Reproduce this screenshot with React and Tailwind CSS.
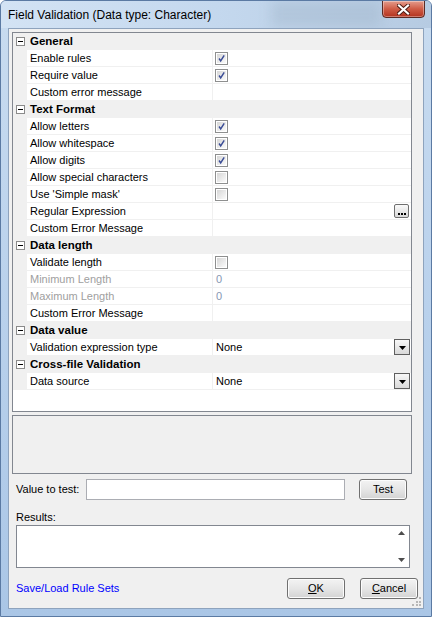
import React from 'react';

const rows = [
  { cat: 'General' },
  { label: 'Enable rules', type: 'check', checked: true },
  { label: 'Require value', type: 'check', checked: true },
  { label: 'Custom error message' },
  { cat: 'Text Format' },
  { label: 'Allow letters', type: 'check', checked: true },
  { label: 'Allow whitespace', type: 'check', checked: true },
  { label: 'Allow digits', type: 'check', checked: true },
  { label: 'Allow special characters', type: 'check', checked: false },
  { label: "Use 'Simple mask'", type: 'check', checked: false },
  { label: 'Regular Expression', type: 'ellipsis' },
  { label: 'Custom Error Message' },
  { cat: 'Data length' },
  { label: 'Validate length', type: 'check', checked: false },
  { label: 'Minimum Length', disabled: true, value: '0' },
  { label: 'Maximum Length', disabled: true, value: '0' },
  { label: 'Custom Error Message' },
  { cat: 'Data value' },
  { label: 'Validation expression type', type: 'dropdown', value: 'None' },
  { cat: 'Cross-file Validation' },
  { label: 'Data source', type: 'dropdown', value: 'None' },
];

const CheckBox = ({ checked }) => (
  <div className="w-[13px] h-[13px] border border-[#8e8f8f] bg-white p-px">
    <div className="w-full h-full bg-linear-to-br from-[#d6d6d6] to-[#fbfbfb] relative">
      {checked && (
        <svg viewBox="0 0 11 11" className="absolute inset-0 w-full h-full">
          <path d="M2.5 5.5 L4.5 8.5 L8.8 1.8" fill="none" stroke="#3a4c96" strokeWidth="1.8" />
        </svg>
      )}
    </div>
  </div>
);

const Minus = () => (
  <div className="w-[9px] h-[9px] border border-[#8a8a8a] bg-white flex items-center justify-center">
    <div className="w-[5px] h-px bg-black" />
  </div>
);

const VistaButton = ({ children, className = '' }) => (
  <div
    className={`flex items-center justify-center border border-[#707070] rounded-[3px] bg-linear-to-b from-[#f3f3f3] via-[#e6e6e6] to-[#d3d3d3] shadow-[inset_0_0_0_1px_#fcfcfc] ${className}`}
  >
    {children}
  </div>
);

const PropRow = ({ row }) => {
  if (row.cat) {
    return (
      <div className="flex h-[17px] bg-[#f0f0f0] items-center">
        <div className="w-[14px] flex justify-center pl-px">
          <Minus />
        </div>
        <span className="pl-[3px] font-bold text-[11.5px] text-black">{row.cat}</span>
      </div>
    );
  }
  return (
    <div className="flex h-[17px]">
      <div className="w-[14px] bg-[#f0f0f0]" />
      <div
        className={`w-[186px] border-b border-r border-[#f0f0f0] pl-[3px] flex items-center ${
          row.disabled ? 'text-[#a0a0a0]' : 'text-black'
        }`}
      >
        {row.label}
      </div>
      <div className="flex-1 border-b border-[#f0f0f0] flex items-center pl-[2px] pr-px relative">
        {row.type === 'check' && <CheckBox checked={row.checked} />}
        {row.value && (
          <span className={row.disabled ? 'text-[#8796b4] pl-px' : 'text-black pl-px'}>{row.value}</span>
        )}
        {row.type === 'ellipsis' && (
          <div className="ml-auto mr-px w-[15px] h-[14px] border border-[#6f6f6f] rounded-[2px] bg-linear-to-b from-[#fafafa] to-[#d8d8d8] flex items-end justify-center gap-px pb-[2px]">
            <div className="w-[2px] h-[2px] bg-black" />
            <div className="w-[2px] h-[2px] bg-black" />
            <div className="w-[2px] h-[2px] bg-black" />
          </div>
        )}
        {row.type === 'dropdown' && (
          <div className="ml-auto w-[16px] h-[16px] border border-[#5f5f5f] bg-linear-to-b from-[#f8f8f8] to-[#d9d9d9] flex items-end justify-center pb-[4px]">
            <svg width="7" height="4" viewBox="0 0 7 4">
              <path d="M0 0 H7 L3.5 4 Z" fill="#000" />
            </svg>
          </div>
        )}
      </div>
    </div>
  );
};

export default function App() {
  return (
    <div
      className="w-[432px] h-[617px] flex flex-col bg-linear-to-b from-[#c9dcf0] via-[#b9d1ec] to-[#aac6e6] border border-[#5b7aa3] rounded-t-[6px] overflow-hidden text-[11px]"
      style={{ fontFamily: '"Liberation Sans", Arial, sans-serif' }}
    >
      {/* Title bar */}
      <div className="h-[27px] relative flex items-center pl-[7px] bg-linear-to-r from-[#d3e3f4] via-[#c4d8ee] to-[#b6cbe2]">
        <div className="absolute left-[270px] top-0 w-[110px] h-[26px] bg-[#9fb3c8]/40 blur-[6px]" />
        <span className="relative text-[12px] text-black">Field Validation (Data type: Character)</span>
        <div className="absolute top-[-1px] right-[6px] w-[43px] h-[18px] rounded-b-[4px] border border-[#5b2a24] bg-linear-to-b from-[#e39c8d] via-[#cf5b45] to-[#b2321e] flex items-center justify-center shadow-[inset_0_0_0_1px_rgba(255,255,255,0.35)]">
          <svg width="13" height="11" viewBox="0 0 13 11">
            <path d="M2 1.5 L11 9.5 M11 1.5 L2 9.5" stroke="#4a1a12" strokeWidth="4" strokeLinecap="square" />
            <path d="M2 1.5 L11 9.5 M11 1.5 L2 9.5" stroke="#ffffff" strokeWidth="2.2" strokeLinecap="square" />
          </svg>
        </div>
      </div>

      {/* Client area */}
      <div className="mx-[7px] mb-[7px] flex-1 bg-[#f0f0f0] border border-[#8ea3bd] pl-[3px] pt-[3px] flex flex-col relative">
        {/* Property grid */}
        <div className="w-[400px] h-[380px] border border-[#828790] bg-white">
          {rows.map((r, i) => (
            <PropRow key={i} row={r} />
          ))}
        </div>

        {/* Description pane */}
        <div className="mt-[3px] w-[400px] h-[59px] border border-[#828790] bg-[#f0f0f0]" />

        {/* Value to test */}
        <div className="mt-[5px] h-[21px] flex items-center">
          <span className="ml-[4px] w-[70px]">Value to test:</span>
          <div className="w-[259px] h-[21px] border border-[#abadb3] bg-white" />
          <VistaButton className="ml-[14px] w-[48px] h-[21px]">Test</VistaButton>
        </div>

        <div className="mt-[11px] ml-[4px] leading-[13px]">Results:</div>
        <div className="mt-[1px] ml-[4px] w-[394px] h-[43px] border border-[#828790] bg-white flex">
          <div className="flex-1" />
          <div className="w-[16px] flex flex-col justify-between items-center py-[5px]">
            <svg width="7" height="4" viewBox="0 0 7 4">
              <path d="M0 4 H7 L3.5 0 Z" fill="#4d4d4d" />
            </svg>
            <svg width="7" height="4" viewBox="0 0 7 4">
              <path d="M0 0 H7 L3.5 4 Z" fill="#4d4d4d" />
            </svg>
          </div>
        </div>

        {/* Footer */}
        <div className="mt-[10px] flex items-center h-[21px]">
          <span className="ml-[4px] text-[#0000ff] text-[11px]">Save/Load Rule Sets</span>
          <VistaButton className="ml-auto w-[58px] h-[21px]">
            <span>
              <span className="underline">O</span>K
            </span>
          </VistaButton>
          <VistaButton className="ml-[15px] mr-[5px] w-[58px] h-[21px]">
            <span>
              <span className="underline">C</span>ancel
            </span>
          </VistaButton>
        </div>

        {/* Resize grip */}
        <div className="absolute right-[1px] bottom-[1px] w-[10px] h-[10px] grid grid-cols-3 gap-px opacity-70">
          <div />
          <div />
          <div className="w-[2px] h-[2px] bg-[#a0a0a0]" />
          <div />
          <div className="w-[2px] h-[2px] bg-[#a0a0a0]" />
          <div className="w-[2px] h-[2px] bg-[#a0a0a0]" />
          <div className="w-[2px] h-[2px] bg-[#a0a0a0]" />
          <div className="w-[2px] h-[2px] bg-[#a0a0a0]" />
          <div className="w-[2px] h-[2px] bg-[#a0a0a0]" />
        </div>
      </div>
    </div>
  );
}
